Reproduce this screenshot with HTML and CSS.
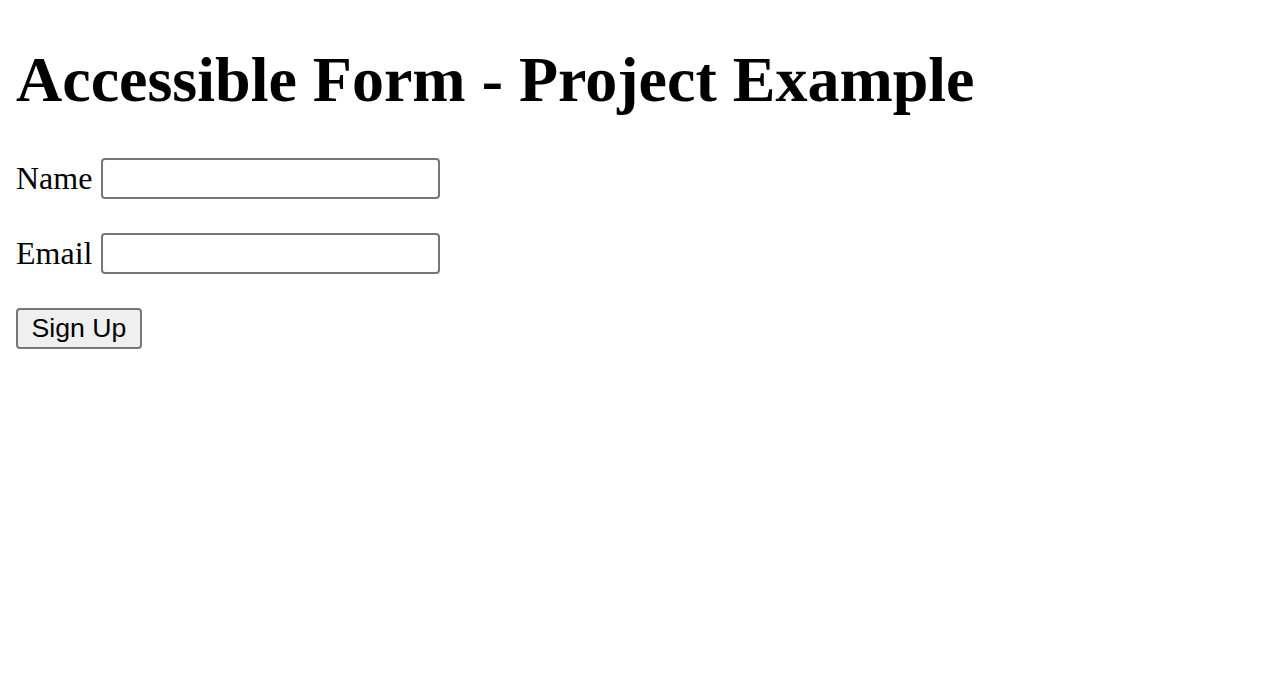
FILE: index.html
```html
<!DOCTYPE html>
<html lang="en">
<head>
<meta charset="utf-8">
<title>Accessible Form - Project Example</title>
<link rel="stylesheet" href="styles.css">
</head>
<body>
<h1 class="title">Accessible Form - Project Example</h1>
<form class="form">
  <div class="row">
    <label class="label" for="name">Name</label>
    <input class="field" id="name" type="text">
  </div>
  <div class="row">
    <label class="label" for="email">Email</label>
    <input class="field" id="email" type="email">
  </div>
  <div class="row">
    <button class="btn" type="submit">Sign Up</button>
  </div>
</form>
</body>
</html>
```
FILE: styles.css
```css
html, body {
  background: #fff;
}
body {
  margin: 0;
  padding: 43px 16px 16px;
  font-family: "Liberation Serif", "Times New Roman", serif;
  font-size: 32px;
  color: #000;
}
.title {
  font-size: 64px;
  font-weight: bold;
  line-height: 74px;
  margin: 0;
}
.form {
  margin-top: 41px;
  display: flex;
  flex-direction: column;
  gap: 34px;
}
.row {
  display: flex;
  align-items: center;
  gap: 9px;
  height: 41px;
}
.label {
  line-height: 37px;
}
.field {
  box-sizing: border-box;
  width: 339px;
  height: 41px;
  margin: 0;
  padding: 2px 4px;
  border: 2px solid #767676;
  border-radius: 4px;
  background: #fff;
  font-size: 26px;
}
.btn {
  box-sizing: border-box;
  width: 126px;
  height: 41px;
  margin: 0;
  padding: 0;
  border: 2px solid #767676;
  border-radius: 4px;
  background: #efefef;
  color: #000;
  font-family: "Liberation Sans", Arial, sans-serif;
  font-size: 26.67px;
}
```
